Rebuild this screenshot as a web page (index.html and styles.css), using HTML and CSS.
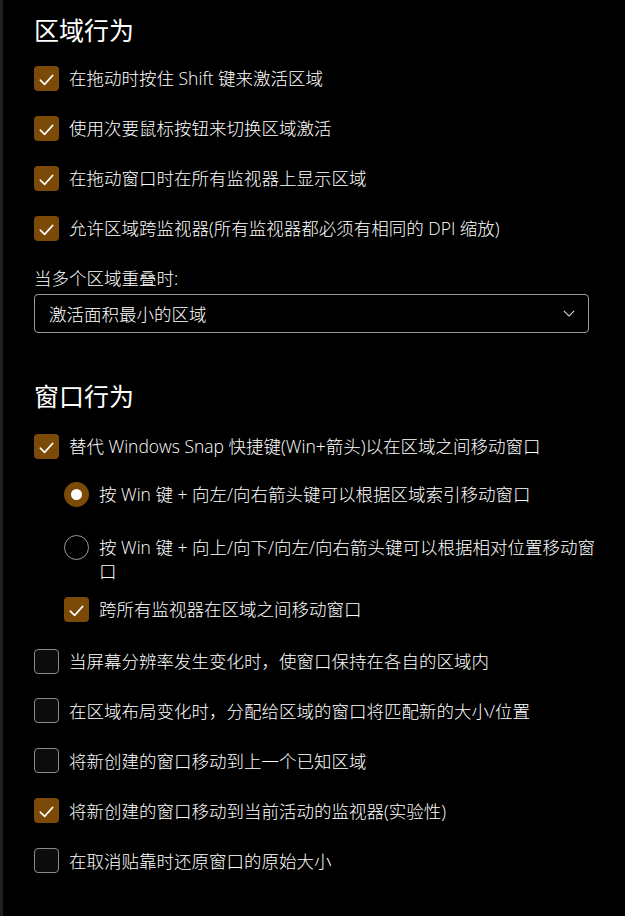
FILE: index.html
```html
<!DOCTYPE html>
<html lang="zh-CN">
<head>
<meta charset="utf-8">
<link rel="stylesheet" href="styles.css">
</head>
<body>
<div class="page">
  <h2 class="title">区域行为</h2>
  <div class="list first">
    <div class="row"><span class="cb on"><svg viewBox="0 0 25 25"><path d="M6.3 14.1 L10.6 18.4 L18.7 9.4"/></svg></span><span class="txt">在拖动时按住 Shift 键来激活区域</span></div>
    <div class="row"><span class="cb on"><svg viewBox="0 0 25 25"><path d="M6.3 14.1 L10.6 18.4 L18.7 9.4"/></svg></span><span class="txt">使用次要鼠标按钮来切换区域激活</span></div>
    <div class="row"><span class="cb on"><svg viewBox="0 0 25 25"><path d="M6.3 14.1 L10.6 18.4 L18.7 9.4"/></svg></span><span class="txt">在拖动窗口时在所有监视器上显示区域</span></div>
    <div class="row"><span class="cb on"><svg viewBox="0 0 25 25"><path d="M6.3 14.1 L10.6 18.4 L18.7 9.4"/></svg></span><span class="txt">允许区域跨监视器(所有监视器都必须有相同的 DPI 缩放)</span></div>
  </div>
  <div class="label">当多个区域重叠时:</div>
  <div class="select">
    <span class="sel-text">激活面积最小的区域</span>
    <svg class="chev" viewBox="0 0 14 8"><path d="M1 1 L7 7 L13 1"/></svg>
  </div>

  <h2 class="title second">窗口行为</h2>
  <div class="list snap">
    <div class="row"><span class="cb on"><svg viewBox="0 0 25 25"><path d="M6.3 14.1 L10.6 18.4 L18.7 9.4"/></svg></span><span class="txt">替代 Windows Snap 快捷键(Win+箭头)以在区域之间移动窗口</span></div>
  </div>
  <div class="sub">
    <div class="row radio-row r1"><span class="radio on"></span><span class="txt">按 Win 键 + 向左/向右箭头键可以根据区域索引移动窗口</span></div>
    <div class="row radio-row r2"><span class="radio"></span><span class="txt">按 Win 键 + 向上/向下/向左/向右箭头键可以根据相对位置移动窗口</span></div>
    <div class="row"><span class="cb on"><svg viewBox="0 0 25 25"><path d="M6.3 14.1 L10.6 18.4 L18.7 9.4"/></svg></span><span class="txt">跨所有监视器在区域之间移动窗口</span></div>
  </div>
  <div class="list last">
    <div class="row"><span class="cb"></span><span class="txt">当屏幕分辨率发生变化时，使窗口保持在各自的区域内</span></div>
    <div class="row"><span class="cb"></span><span class="txt">在区域布局变化时，分配给区域的窗口将匹配新的大小/位置</span></div>
    <div class="row"><span class="cb"></span><span class="txt">将新创建的窗口移动到上一个已知区域</span></div>
    <div class="row"><span class="cb on"><svg viewBox="0 0 25 25"><path d="M6.3 14.1 L10.6 18.4 L18.7 9.4"/></svg></span><span class="txt">将新创建的窗口移动到当前活动的监视器(实验性)</span></div>
    <div class="row"><span class="cb"></span><span class="txt">在取消贴靠时还原窗口的原始大小</span></div>
  </div>
</div>
</body>
</html>
```

FILE: styles.css
```css
html, body {
  margin: 0;
  padding: 0;
  background: #000;
}
body {
  color: #fff;
  font-family: "Open Sans", "Noto Sans CJK SC", sans-serif;
  font-size: 17.5px;
  font-weight: 300;
  width: 625px;
  height: 916px;
  overflow: hidden;
}
.page {
  box-sizing: border-box;
  height: 916px;
  border-left: 3px solid #202020;
  padding: 12px 17px 0 31px;
}
.title {
  margin: 0;
  font-size: 25px;
  line-height: 36px;
  font-weight: 400;
}
.title.second {
  margin-top: 45px;
}
.list.first {
  margin-top: 5px;
}
.list.snap {
  margin-top: 7px;
}
.list.last {
  margin-top: 2px;
}
.row {
  display: flex;
  align-items: center;
  min-height: 50px;
}
.list.last .row {
  min-height: 50px;
  height: 50px;
}
.list.last .row:first-child {
  margin-bottom: -0.5px;
}
.txt {
  line-height: 24px;
}
.cb {
  flex: none;
  box-sizing: border-box;
  width: 25px;
  height: 25px;
  border-radius: 4px;
  border: 1.3px solid #8a8a8a;
  background: #0c0c0c;
  margin-right: 10px;
  display: flex;
}
.cb.on {
  border: none;
  background: #7b4a06;
}
.cb svg {
  width: 25px;
  height: 25px;
}
.cb svg path {
  fill: none;
  stroke: #fff;
  stroke-width: 1.6;
  stroke-linecap: round;
  stroke-linejoin: round;
}
.label {
  margin-top: 13px;
  line-height: 24px;
}
.select {
  box-sizing: border-box;
  margin-top: 4px;
  width: 555px;
  height: 39px;
  border: 1px solid #9a9a9a;
  border-radius: 4px;
  display: flex;
  align-items: center;
  justify-content: space-between;
  padding: 0 13px 0 14px;
}
.chev {
  width: 12px;
  height: 7px;
}
.chev path {
  fill: none;
  stroke: #ddd;
  stroke-width: 1.3;
}
.sub {
  padding-left: 30px;
}
.radio-row.r1 {
  min-height: 46px;
}
.radio-row.r2 {
  align-items: flex-start;
  padding-top: 18px;
  padding-bottom: 1px;
  min-height: 0;
}
.radio {
  flex: none;
  box-sizing: border-box;
  width: 25px;
  height: 25px;
  border-radius: 50%;
  border: 1.3px solid #9a9a9a;
  margin-right: 10px;
}
.radio-row.r2 .radio {
  margin-top: -0.5px;
}
.radio.on {
  border: 7.5px solid #7b4a06;
  background: #fff;
}
```
